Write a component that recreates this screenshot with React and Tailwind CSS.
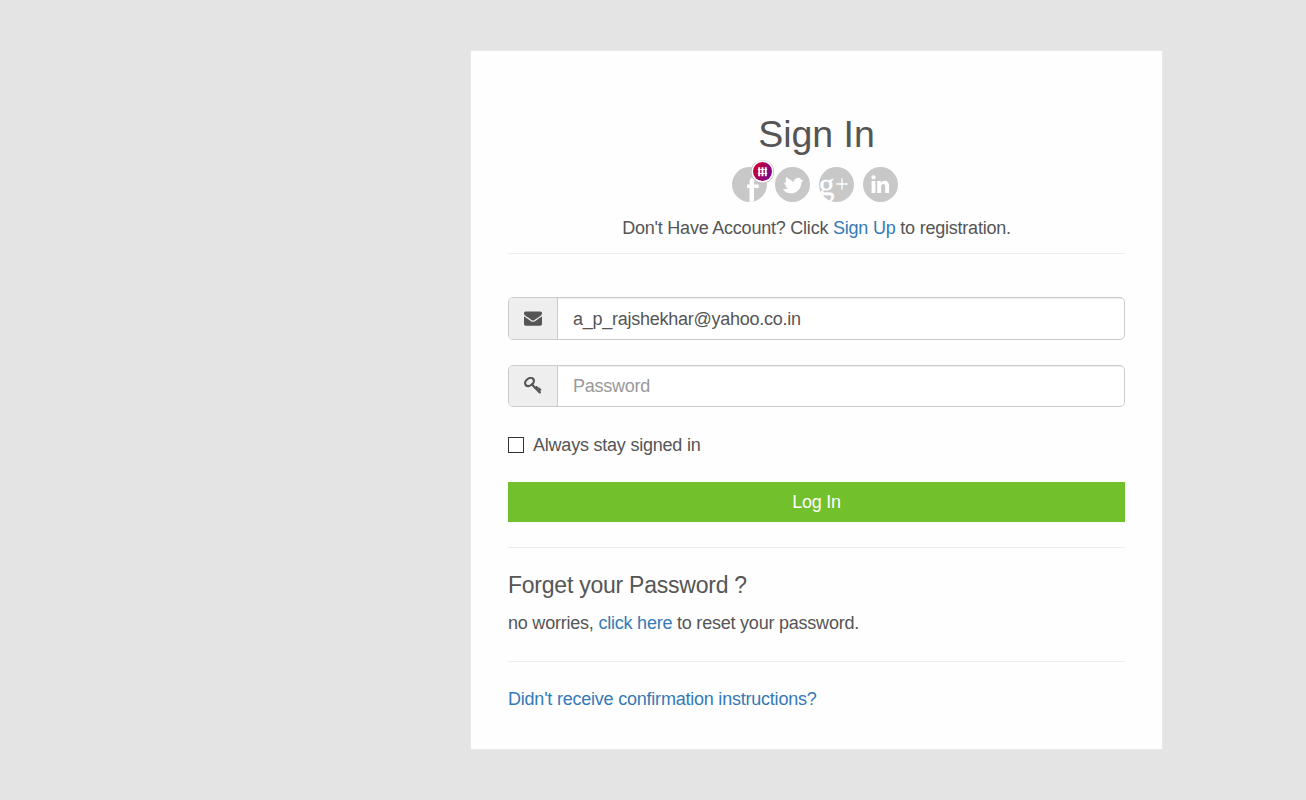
function EnvelopeIcon() {
  return (
    <svg viewBox="0 0 1792 1792" className="size-[18px] fill-[#555]">
      <path d="M1792 710v794q0 66-47 113t-113 47h-1472q-66 0-113-47t-47-113v-794q44 49 101 87 362 246 497 345 57 42 92.5 65.5t94.5 48 110 24.5h2q51 0 110-24.5t94.5-48 92.5-65.5q170-123 498-345 57-39 100-87zm0-294q0 79-49 151t-122 123q-376 261-468 325-10 7-42.5 31t-54 38.8-52 32.5-57.5 27-50 9h-2q-23 0-50-9t-57.5-27-52-32.5-54-38.8-42.5-31q-91-64-262-182.5t-205-142.5q-62-42-117-115.5t-55-136.5q0-78 41.5-130t118.5-52h1472q65 0 112.5 47t47.5 113z" />
    </svg>
  );
}

function KeyIcon() {
  return (
    <svg viewBox="0 0 18 18" className="size-[18px] fill-none stroke-[#555]">
      <ellipse cx="5.5" cy="5" rx="4.8" ry="3.500" transform="rotate(-38 5.500 5)" strokeWidth="2.200" />
      <path d="M7.900 7.500l7.900 7.900" strokeWidth="2.300" strokeLinecap="round" />
      <path d="M11.200 11.600l1.900-1.900M13.900 14.200l2.100-2.100" strokeWidth="1.500" />
      <path d="M12.700 9.700l1.500 1.500M15 11.300l1.600 1.600" strokeWidth="1.500" strokeLinecap="round" />
    </svg>
  );
}

function Social({ label, className, children }) {
  return (
    <a aria-label={label} className={"block size-[35px] overflow-hidden rounded-full bg-[#c8c8c8] " + className}>
      <svg viewBox="0 0 35 35" className="size-[35px]">{children}</svg>
    </a>
  );
}

function Badge() {
  return (
    <svg viewBox="0 0 25 25" className="absolute -top-2 left-[18px] size-[25px]">
      <defs>
        <linearGradient id="badge" x1="0" y1="0.2" x2="1" y2="0.8">
          <stop offset="0.1" stopColor="#c80038" />
          <stop offset="0.95" stopColor="#780090" />
        </linearGradient>
      </defs>
      <circle cx="12.5" cy="12.8" r="11.6" fill="#bdbdbd" />
      <circle cx="12.5" cy="12.5" r="10.9" fill="#fff" />
      <circle cx="12.5" cy="12.5" r="9.5" fill="url(#badge)" />
      <path d="M9.2 8.3v9M12.5 8.3v9M15.8 8.3v9" stroke="#fff" strokeWidth="1.9" />
      <path d="M7.7 10.5h9.6M7.7 14.5h9.6" stroke="#fff" strokeWidth="0.8" />
    </svg>
  );
}

function Field({ icon, className, ...props }) {
  return (
    <div className={"flex overflow-hidden rounded-[5px] border border-[#ccc] bg-white " + className}>
      <span className="flex w-[49px] shrink-0 items-center justify-center border-r border-[#ccc] bg-[#eee] pb-px">{icon}</span>
      <input
        className="min-w-0 flex-1 px-[15px] pt-px text-[18px] tracking-[-0.26px] text-[#555] shadow-[inset_0_1px_1px_rgba(0,0,0,0.075)] outline-none placeholder:text-[#999]"
        {...props}
      />
    </div>
  );
}

export default function App() {
  return (
    <div className="h-[800px] overflow-hidden bg-[#e4e4e4] pt-[51px] pl-[471px] font-['Liberation_Sans',Arial,sans-serif] text-[18px] leading-[25px] tracking-[-0.22px] text-[#555]">
      <main className="h-[698px] w-[691px] bg-[#fefefe] px-[37px] pt-[63px] shadow-[0_0_2px_#f2f2f2]">
        <h1 className="text-center text-[37.5px] leading-[41px] tracking-normal">Sign In</h1>
        <div className="mt-3 flex pl-[224px]">
          <div className="relative">
            <Social label="Facebook" className="">
              <path d="M22 36V21h4.7v-3.4H22v-2c0-1.8.6-2.6 2-2.6h2V10h-3c-4 0-5.500 2-5.500 5.500v2.100H15V21h2.500v15z" fill="#fff" />
            </Social>
            <Badge />
          </div>
          <Social label="Twitter" className="ml-2">
            <path d="M7.600 22c2.200.500 4.200.200 5.700-.900-1.400-.300-2.500-1-3.100-1.900l1.300-.300C10 17.900 9.300 16.700 9.300 15.300l2 .400C10.500 14.200 10.600 12 11.400 10c2.200 1.800 4.800 3.200 7 5.300.400-2.500 2.200-4.500 4.600-4.600 1.400 0 2.500.700 3.100 1.900l2.500 1.200-2.100 1.100C26.300 21.300 22 26.300 16 26.300c-3.500 0-6.500-1.500-8.400-4.300z" fill="#fff" />
          </Social>
          <Social label="Google Plus" className="ml-[9px]">
            <text x="-0.5" y="27.5" fontFamily="Liberation Serif, serif" fontSize="32" fill="#fff" stroke="#fff" strokeWidth="0.3">g</text>
            <path d="M17.300 17h11.400M23 11.500v11" stroke="#fff" strokeWidth="1.300" />
          </Social>
          <Social label="LinkedIn" className="ml-[9px]">
            <circle cx="10.500" cy="10.300" r="2.100" fill="#fff" />
            <path d="M8.600 14h3.800v12H8.600zM14.200 14h3.700v1.700c.8-1.300 2-2 3.700-2 3.100 0 4.500 2 4.500 5V26h-3.900v-6.200c0-1.700-.500-2.700-1.900-2.700-1.400 0-2.200 1-2.200 2.800V26h-3.900z" fill="#fff" />
          </Social>
        </div>
        <p className="mt-3.5 text-center">
          Don't Have Account? Click <a className="text-[#337ab7]">Sign Up</a> to registration.
        </p>
        <hr className="mt-3 border-[#eee]" />
        <Field icon={<EnvelopeIcon />} className="mt-[43px] h-[43px]" type="text" defaultValue="a_p_rajshekhar@yahoo.co.in" />
        <Field icon={<KeyIcon />} className="mt-[25px] h-[42px]" type="password" placeholder="Password" />
        <label className="mt-[26px] flex items-center gap-[9px]">
          <input type="checkbox" className="mb-0.5 size-4 appearance-none border border-[#333] bg-white" />
          Always stay signed in
        </label>
        <button className="mt-6 block h-10 w-full bg-[#72c02c] text-white">Log In</button>
        <hr className="mt-[25px] border-[#eee]" />
        <h2 className="mt-6 text-[23px] leading-[26px] tracking-[-0.24px]">Forget your Password ?</h2>
        <p className="mt-[13px]">
          no worries, <a className="text-[#337ab7]">click here</a> to reset your password.
        </p>
        <hr className="mt-[25px] border-[#eee]" />
        <p className="mt-[25px]">
          <a className="text-[#337ab7]">Didn't receive confirmation instructions?</a>
        </p>
      </main>
    </div>
  );
}
